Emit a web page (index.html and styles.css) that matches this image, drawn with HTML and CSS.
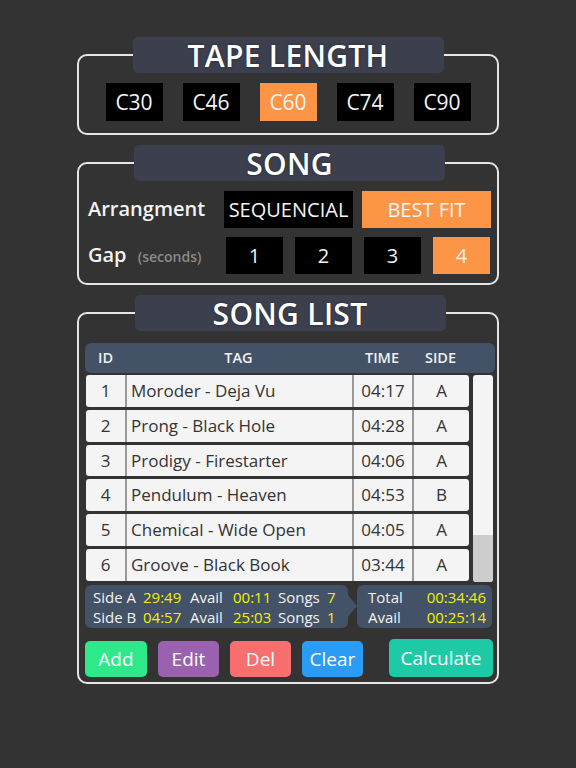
FILE: index.html
```html
<!DOCTYPE html>
<html>
<head>
<meta charset="utf-8">
<link rel="stylesheet" href="styles.css">
</head>
<body>
<div class="app">
  <section class="group g-tape">
    <div class="title">TAPE LENGTH</div>
    <div class="tape-row">
      <div class="btn">C30</div>
      <div class="btn">C46</div>
      <div class="btn on">C60</div>
      <div class="btn">C74</div>
      <div class="btn">C90</div>
    </div>
  </section>

  <section class="group g-song">
    <div class="title">SONG</div>
    <div class="song-row r1">
      <div class="label">Arrangment</div>
      <div class="opts">
        <div class="btn wide">SEQUENCIAL</div>
        <div class="btn wide on">BEST FIT</div>
      </div>
    </div>
    <div class="song-row r2">
      <div class="label">Gap <span class="sub">(seconds)</span></div>
      <div class="opts gaps">
        <div class="btn num">1</div>
        <div class="btn num">2</div>
        <div class="btn num">3</div>
        <div class="btn num on">4</div>
      </div>
    </div>
  </section>

  <section class="group g-list">
    <div class="title">SONG LIST</div>
    <div class="thead">
      <div class="c-id">ID</div>
      <div class="c-tag">TAG</div>
      <div class="c-time">TIME</div>
      <div class="c-side">SIDE</div>
    </div>
    <div class="tbody">
      <div class="rows">
        <div class="row"><div class="c-id">1</div><div class="c-tag">Moroder - Deja Vu</div><div class="c-time">04:17</div><div class="c-side">A</div></div>
        <div class="row"><div class="c-id">2</div><div class="c-tag">Prong - Black Hole</div><div class="c-time">04:28</div><div class="c-side">A</div></div>
        <div class="row"><div class="c-id">3</div><div class="c-tag">Prodigy - Firestarter</div><div class="c-time">04:06</div><div class="c-side">A</div></div>
        <div class="row"><div class="c-id">4</div><div class="c-tag">Pendulum - Heaven</div><div class="c-time">04:53</div><div class="c-side">B</div></div>
        <div class="row"><div class="c-id">5</div><div class="c-tag">Chemical - Wide Open</div><div class="c-time">04:05</div><div class="c-side">A</div></div>
        <div class="row"><div class="c-id">6</div><div class="c-tag">Groove - Black Book</div><div class="c-time">03:44</div><div class="c-side">A</div></div>
      </div>
      <div class="scroll"><div class="thumb"></div></div>
    </div>
    <div class="summary">
      <div class="sum-left">
        <span>Side A</span><span class="y">29:49</span><span>Avail</span><span class="y">00:11</span><span>Songs</span><span class="y">7</span>
        <span>Side B</span><span class="y">04:57</span><span>Avail</span><span class="y">25:03</span><span>Songs</span><span class="y">1</span>
      </div>
      <div class="sum-right">
        <span>Total</span><span class="y">00:34:46</span>
        <span>Avail</span><span class="y">00:25:14</span>
      </div>
    </div>
    <div class="actions">
      <div class="act add">Add</div>
      <div class="act edit">Edit</div>
      <div class="act del">Del</div>
      <div class="act clear">Clear</div>
      <div class="act calc">Calculate</div>
    </div>
  </section>
</div>
</body>
</html>
```

FILE: styles.css
```css
html, body {
  margin: 0;
  padding: 0;
  background: #333333;
}
body {
  font-family: "Open Sans", "Noto Sans", sans-serif;
  color: #f2f2f2;
  width: 576px;
  height: 768px;
}
.app {
  padding-left: 77px;
  padding-top: 54px;
}
.group {
  box-sizing: border-box;
  width: 422px;
  border: 2px solid #e6e6e6;
  border-radius: 10px;
}
.g-song, .g-list {
  margin-top: 27px;
}
.title {
  width: 311px;
  height: 36px;
  margin: -19px auto 0;
  background: #3b3f4e;
  border-radius: 5px;
  text-align: center;
  font-size: 30px;
  font-weight: 600;
  line-height: 37px;
  color: #ffffff;
  letter-spacing: 0.3px;
  text-shadow: 0 0 2px #20232c;
}
.btn {
  box-sizing: border-box;
  background: #000000;
  color: #f4f4f4;
  text-align: center;
  font-size: 21px;
  height: 38px;
  line-height: 38px;
}
.btn.on {
  background: #fd9546;
}
.g-tape {
  padding-bottom: 12px;
}
.tape-row {
  display: flex;
  justify-content: center;
  gap: 20px;
  margin-top: 10px;
}
.tape-row .btn {
  width: 57px;
}
.g-song {
  padding: 0 6px 9px 9px;
}
.song-row {
  display: flex;
  align-items: center;
  height: 37px;
}
.song-row.r1 { margin-top: 10px; }
.song-row.r2 { margin-top: 9px; }
.label {
  flex: 1;
  font-size: 20px;
  font-weight: 600;
  color: #f2f2f2;
  margin-top: -2px;
}
.sub {
  font-size: 14px;
  font-weight: 600;
  color: #8a8a8a;
  margin-left: 6px;
}
.opts {
  display: flex;
  gap: 9px;
}
.btn.wide {
  width: 129px;
  height: 37px;
  line-height: 37px;
  font-size: 20px;
}
.gaps {
  gap: 12px;
  margin-right: 1px;
}
.btn.num {
  width: 57px;
  height: 37px;
  line-height: 37px;
  font-size: 20px;
}
.g-list {
  padding: 0 2px 5px 6px;
}
.thead {
  display: flex;
  margin-top: 12px;
  height: 30px;
  line-height: 30px;
  background: #435267;
  border-radius: 6px;
  padding-left: 1px;
  font-size: 14.5px;
  font-weight: 600;
  color: #f0f0f0;
}
.c-id { width: 39px; text-align: center; }
.c-tag { width: 227px; text-align: center; }
.c-time { width: 60px; text-align: center; }
.c-side { width: 57px; text-align: center; }
.tbody {
  display: flex;
  margin-top: 2px;
}
.rows {
  display: flex;
  flex-direction: column;
  gap: 3px;
  margin-left: 1px;
}
.row {
  display: flex;
  width: 383px;
  height: 31.8px;
  line-height: 31.8px;
  background: #f4f4f4;
  border-radius: 3px;
  font-size: 17px;
  color: #333333;
}
.row > div {
  box-sizing: border-box;
}
.row .c-tag, .row .c-time, .row .c-side {
  border-left: 2px solid #9a9a9a;
}
.row .c-tag {
  text-align: left;
  padding-left: 4px;
}
.scroll {
  box-sizing: border-box;
  width: 20px;
  margin-left: 4px;
  height: 207px;
  background: #f4f4f4;
  border-radius: 3px;
  display: flex;
  flex-direction: column;
  justify-content: flex-end;
  overflow: hidden;
}
.thumb {
  height: 47px;
  background: #cdcdcd;
  border-radius: 0 0 3px 3px;
}
.summary {
  display: flex;
  gap: 9px;
  margin-top: 3px;
  height: 43px;
  font-size: 15px;
  line-height: 19px;
}
.y { color: #f2f000; }
.sum-left {
  position: relative;
  box-sizing: border-box;
  width: 263px;
  background: #435267;
  border-radius: 6px;
  padding: 3px 0 0 8px;
  display: grid;
  grid-template-columns: 50px 47px 43px 45px 49px auto;
}
.sum-left::after {
  content: "";
  position: absolute;
  right: -9px;
  top: 9px;
  border-left: 10px solid #435267;
  border-top: 12px solid transparent;
  border-bottom: 12px solid transparent;
}
.sum-right {
  box-sizing: border-box;
  width: 135px;
  background: #435267;
  border-radius: 6px;
  padding: 3px 6px 0 11px;
  display: grid;
  grid-template-columns: auto auto;
  justify-content: space-between;
}
.actions {
  display: flex;
  align-items: flex-end;
  margin-top: 11px;
  gap: 11px;
}
.act {
  width: 62px;
  height: 36px;
  line-height: 36px;
  border-radius: 5px;
  text-align: center;
  font-size: 19px;
  color: #ffffff;
}
.add { background: #2ee98a; }
.edit { background: #9a62ae; width: 61px; }
.del { background: #f86f6f; width: 61px; }
.clear { background: #2a9cf6; width: 61px; }
.calc {
  background: #1ecaa6;
  width: 104px;
  height: 38px;
  line-height: 38px;
  margin-left: auto;
  margin-right: 2px;
}
```
